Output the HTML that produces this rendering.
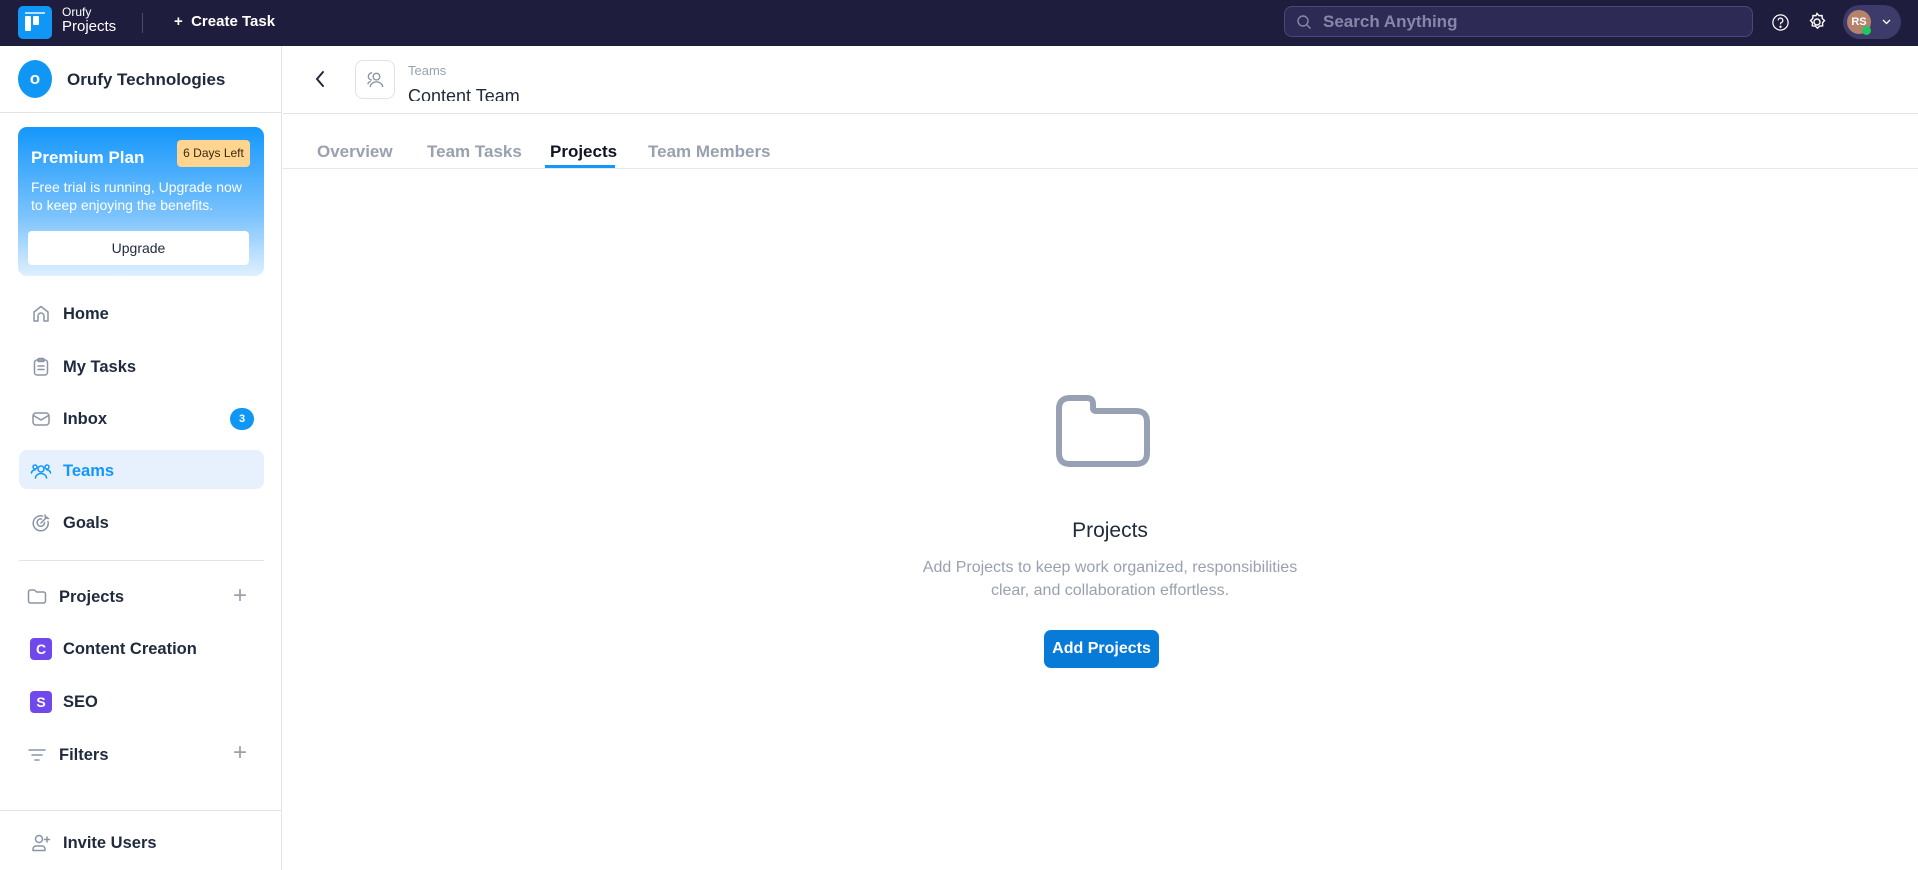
<!DOCTYPE html>
<html><head><meta charset="utf-8"><style>
*{box-sizing:border-box;margin:0;padding:0}
body{width:1918px;height:870px;overflow:hidden;font-family:"Liberation Sans",sans-serif;background:#fff;position:relative;color:#1f2937}
.abs{position:absolute}
.top{left:0;top:0;width:1918px;height:46px;background:#1f1d3d}
.side{left:0;top:46px;width:282px;height:824px;border-right:1px solid #e2e4ea;background:#fff}
.nav{position:absolute;left:30px;font-size:16.5px;color:#1f2a3c;display:flex;align-items:center;gap:11px;font-weight:600}
.nav svg{width:22px;height:22px;fill:none;stroke:#8a94a6;stroke-width:1.5;stroke-linecap:round;stroke-linejoin:round}
.tab{position:absolute;top:142px;font-size:17px;color:#99a0b0;font-weight:600}
</style></head><body>
<div class="abs top">
  <div class="abs" style="left:18px;top:6px;width:34px;height:33px;background:#1097f5;border-radius:5px">
    <div class="abs" style="left:7px;top:6px;width:20px;height:2px;background:#fff;opacity:.7"></div>
    <div class="abs" style="left:7px;top:10px;width:6px;height:15px;background:#fff;border-radius:1px"></div>
    <div class="abs" style="left:15px;top:10px;width:6px;height:9px;background:#fff;border-radius:1px"></div>
  </div>
  <div class="abs" style="left:62px;top:6px;color:#fff;font-size:12px;line-height:13px">Orufy</div>
  <div class="abs" style="left:62px;top:18px;color:#fff;font-size:15px;line-height:17px">Projects</div>
  <div class="abs" style="left:142px;top:13px;width:1px;height:20px;background:#4a4870"></div>
  <div class="abs" style="left:174px;top:13px;color:#fff;font-size:15px;font-weight:bold">+&nbsp; Create Task</div>
  <div class="abs" style="left:1284px;top:6px;width:469px;height:31px;border:1px solid #4a4878;border-radius:8px;background:#2d2b55">
    <svg class="abs" style="left:11px;top:7px" width="16" height="16" viewBox="0 0 16 16" fill="none" stroke="#8886a8" stroke-width="1.4"><circle cx="7" cy="7" r="5"/><path d="M11 11l3.5 3.5"/></svg>
    <div class="abs" style="left:38px;top:5px;color:#8886a8;font-size:17px;font-weight:bold">Search Anything</div>
  </div>
  <svg class="abs" style="left:1771px;top:13px" width="19" height="19" viewBox="0 0 20 20" fill="none" stroke="#fff" stroke-width="1.3"><circle cx="10" cy="10" r="8"/><path d="M7.6 7.8a2.4 2.4 0 1 1 3.4 2.2c-.7.3-1 .8-1 1.5v.5"/><circle cx="10" cy="14.5" r=".6" fill="#fff"/></svg>
  <svg class="abs" style="left:1807px;top:12px" width="20" height="20" viewBox="0 0 20 20" fill="none" stroke="#fff" stroke-width="1.4"><path d="M10 1.5l2 2.2 3-.2.3 3 2.2 2-2 2.3.2 3-3 .2-2.2 2.1-2.2-2.1-3-.2.2-3-2-2.3 2.2-2 .3-3 3 .2z"/><circle cx="10" cy="10" r="3"/></svg>
  <div class="abs" style="left:1843px;top:5px;width:58px;height:34px;border-radius:17px;background:#3d3b6a">
    <div class="abs" style="left:4px;top:5px;width:24px;height:24px;border-radius:12px;background:#b5826c;color:#fff;font-size:11px;font-weight:bold;text-align:center;line-height:24px">RS</div>
    <div class="abs" style="left:19px;top:21px;width:9px;height:9px;border-radius:5px;background:#22c55e"></div>
    <svg class="abs" style="left:39px;top:14px" width="9" height="6" viewBox="0 0 9 6" fill="none" stroke="#fff" stroke-width="1.3"><path d="M1 1l3.5 3.5L8 1"/></svg>
  </div>
</div>

<div class="abs side">
  <div class="abs" style="left:18px;top:14px;width:34px;height:38px;border-radius:50%;background:#1097f5;color:#fff;font-weight:bold;font-size:17px;text-align:center;line-height:38px">o</div>
  <div class="abs" style="left:67px;top:24px;font-size:17px;color:#1f2a3c;font-weight:600">Orufy Technologies</div>
  <div class="abs" style="left:0;top:66px;width:282px;height:1px;background:#e2e4ea"></div>
  <div class="abs" style="left:18px;top:81px;width:246px;height:149px;border-radius:9px;background:linear-gradient(#1497fb,#7cc3fd 60%,#dff0fe)">
    <div class="abs" style="left:13px;top:21px;color:#fff;font-weight:bold;font-size:17px">Premium Plan</div>
    <div class="abs" style="left:159px;top:13px;width:73px;height:27px;border-radius:4px;background:#fed48f;color:#3a2a10;font-size:12px;text-align:center;line-height:27px">6 Days Left</div>
    <div class="abs" style="left:13px;top:51px;color:#fff;font-size:14px;line-height:18px">Free trial is running, Upgrade now<br>to keep enjoying the benefits.</div>
    <div class="abs" style="left:10px;top:104px;width:221px;height:34px;border-radius:4px;background:#fff;color:#1f2a3c;font-size:14px;text-align:center;line-height:34px">Upgrade</div>
  </div>
  <div class="nav" style="top:257px"><svg viewBox="0 0 22 22"><path d="M4 18V9l7-5.5L18 9v9h-4v-5a3 3 0 0 0-6 0v5z"/></svg>Home</div>
  <div class="nav" style="top:310px"><svg viewBox="0 0 22 22"><rect x="4.5" y="4" width="13" height="15" rx="2.5"/><rect x="8" y="2.5" width="6" height="3" rx="1"/><path d="M8 10h6M8 13.5h6"/></svg>My Tasks</div>
  <div class="nav" style="top:362px"><svg viewBox="0 0 22 22"><rect x="3" y="5" width="16" height="12" rx="3"/><path d="M3.5 7.5l7.5 4.5 7.5-4.5"/></svg>Inbox</div>
  <div class="abs" style="left:230px;top:362px;width:24px;height:22px;border-radius:11px;background:#1097f5;color:#fff;font-size:11px;font-weight:bold;text-align:center;line-height:22px">3</div>
  <div class="abs" style="left:19px;top:404px;width:245px;height:39px;border-radius:8px;background:#e7f1fd"></div>
  <div class="nav" style="top:414px;color:#1497fb"><svg viewBox="0 0 22 22" style="stroke:#1497fb"><circle cx="11" cy="9" r="3"/><path d="M5.5 18a5.5 4.5 0 0 1 11 0"/><circle cx="5" cy="7" r="2"/><circle cx="17" cy="7" r="2"/><path d="M1.5 13a3.5 3 0 0 1 3.5-3M20.5 13a3.5 3 0 0 0-3.5-3"/></svg>Teams</div>
  <div class="nav" style="top:466px"><svg viewBox="0 0 22 22"><path d="M18 9.5A7.5 7.5 0 1 1 12.5 4"/><path d="M14.5 10.5a3.7 3.7 0 1 1-3-3.5"/><path d="M11 11l6-6M15 3l.5 3 3 .5"/></svg>Goals</div>
  <div class="abs" style="left:19px;top:514px;width:245px;height:1px;background:#e2e4ea"></div>
  <div class="nav" style="top:540px;left:26px"><svg viewBox="0 0 22 22"><path d="M2.5 6a2 2 0 0 1 2-2h4l2 2h7a2 2 0 0 1 2 2v7a2 2 0 0 1-2 2h-13a2 2 0 0 1-2-2z"/></svg>Projects</div>
  <div class="abs" style="left:233px;top:536px;color:#9aa1ae;font-size:24px;font-weight:300">+</div>
  <div class="nav" style="top:592px"><span style="width:22px;height:22px;border-radius:4px;background:#7048ec;color:#fff;font-size:14px;text-align:center;line-height:22px">C</span>Content Creation</div>
  <div class="nav" style="top:645px"><span style="width:22px;height:22px;border-radius:4px;background:#7048ec;color:#fff;font-size:14px;text-align:center;line-height:22px">S</span>SEO</div>
  <div class="nav" style="top:698px;left:26px"><svg viewBox="0 0 22 22"><path d="M3 6h16M6 11h10M9 16h4"/></svg>Filters</div>
  <div class="abs" style="left:233px;top:693px;color:#9aa1ae;font-size:24px;font-weight:300">+</div>
  <div class="abs" style="left:0;top:764px;width:282px;height:1px;background:#e2e4ea"></div>
  <div class="nav" style="top:786px"><svg viewBox="0 0 22 22"><circle cx="9" cy="7" r="3.5"/><path d="M3 18.5v-1.5a3 3 0 0 1 3-3h6a3 3 0 0 1 3 3v1.5zM17 5v5M14.5 7.5h5"/></svg>Invite Users</div>
</div>

<svg class="abs" style="left:313px;top:70px" width="14" height="18" viewBox="0 0 14 18" fill="none" stroke="#1f2a3c" stroke-width="2" stroke-linecap="round"><path d="M10 2L4 9l6 7"/></svg>
<div class="abs" style="left:355px;top:60px;width:40px;height:39px;border:1px solid #dfe2e8;border-radius:8px">
  <svg class="abs" style="left:9px;top:8px" width="21" height="21" viewBox="0 0 22 22" fill="none" stroke="#8a94a6" stroke-width="1.4"><circle cx="12" cy="8" r="3.5"/><path d="M5.5 19a6.5 5.5 0 0 1 13 0"/><path d="M7 11.5A3 3 0 0 1 7.5 4M3 16a4 3.5 0 0 1 3-3"/></svg>
</div>
<div class="abs" style="left:408px;top:63px;font-size:13px;color:#9aa1ae">Teams</div>
<div class="abs" style="left:408px;top:84px;height:17px;overflow:hidden;font-size:18px;color:#1f2a3c;line-height:24px">Content Team</div>
<div class="abs" style="left:283px;top:113px;width:1635px;height:1px;background:#e2e4ea"></div>

<div class="tab" style="left:317px">Overview</div>
<div class="tab" style="left:427px">Team Tasks</div>
<div class="tab" style="left:550px;color:#0f1422">Projects</div>
<div class="tab" style="left:648px">Team Members</div>
<div class="abs" style="left:545px;top:165px;width:70px;height:3px;background:#1497fb"></div>
<div class="abs" style="left:283px;top:168px;width:1635px;height:1px;background:#e2e8f0"></div>

<svg class="abs" style="left:1054px;top:395px" width="97" height="75" viewBox="0 0 97 75" fill="none" stroke="#98a1b3" stroke-width="6" stroke-linejoin="round"><path d="M5 14q0-11 11-11h17q6 0 6 6v4q0 3 3 3h40q11 0 11 11v31q0 11-11 11H16q-11 0-11-11z"/></svg>
<div class="abs" style="left:880px;top:519px;width:460px;text-align:center;font-size:21px;color:#1f2a3c">Projects</div>
<div class="abs" style="left:850px;top:556px;width:520px;text-align:center;font-size:16px;line-height:23px;color:#99a0b0">Add Projects to keep work organized, responsibilities<br>clear, and collaboration effortless.</div>
<div class="abs" style="left:1044px;top:630px;width:115px;height:38px;border-radius:7px;background:#087ad8;color:#fff;font-size:16px;font-weight:bold;text-align:center;line-height:38px">Add Projects</div>
</body></html>
